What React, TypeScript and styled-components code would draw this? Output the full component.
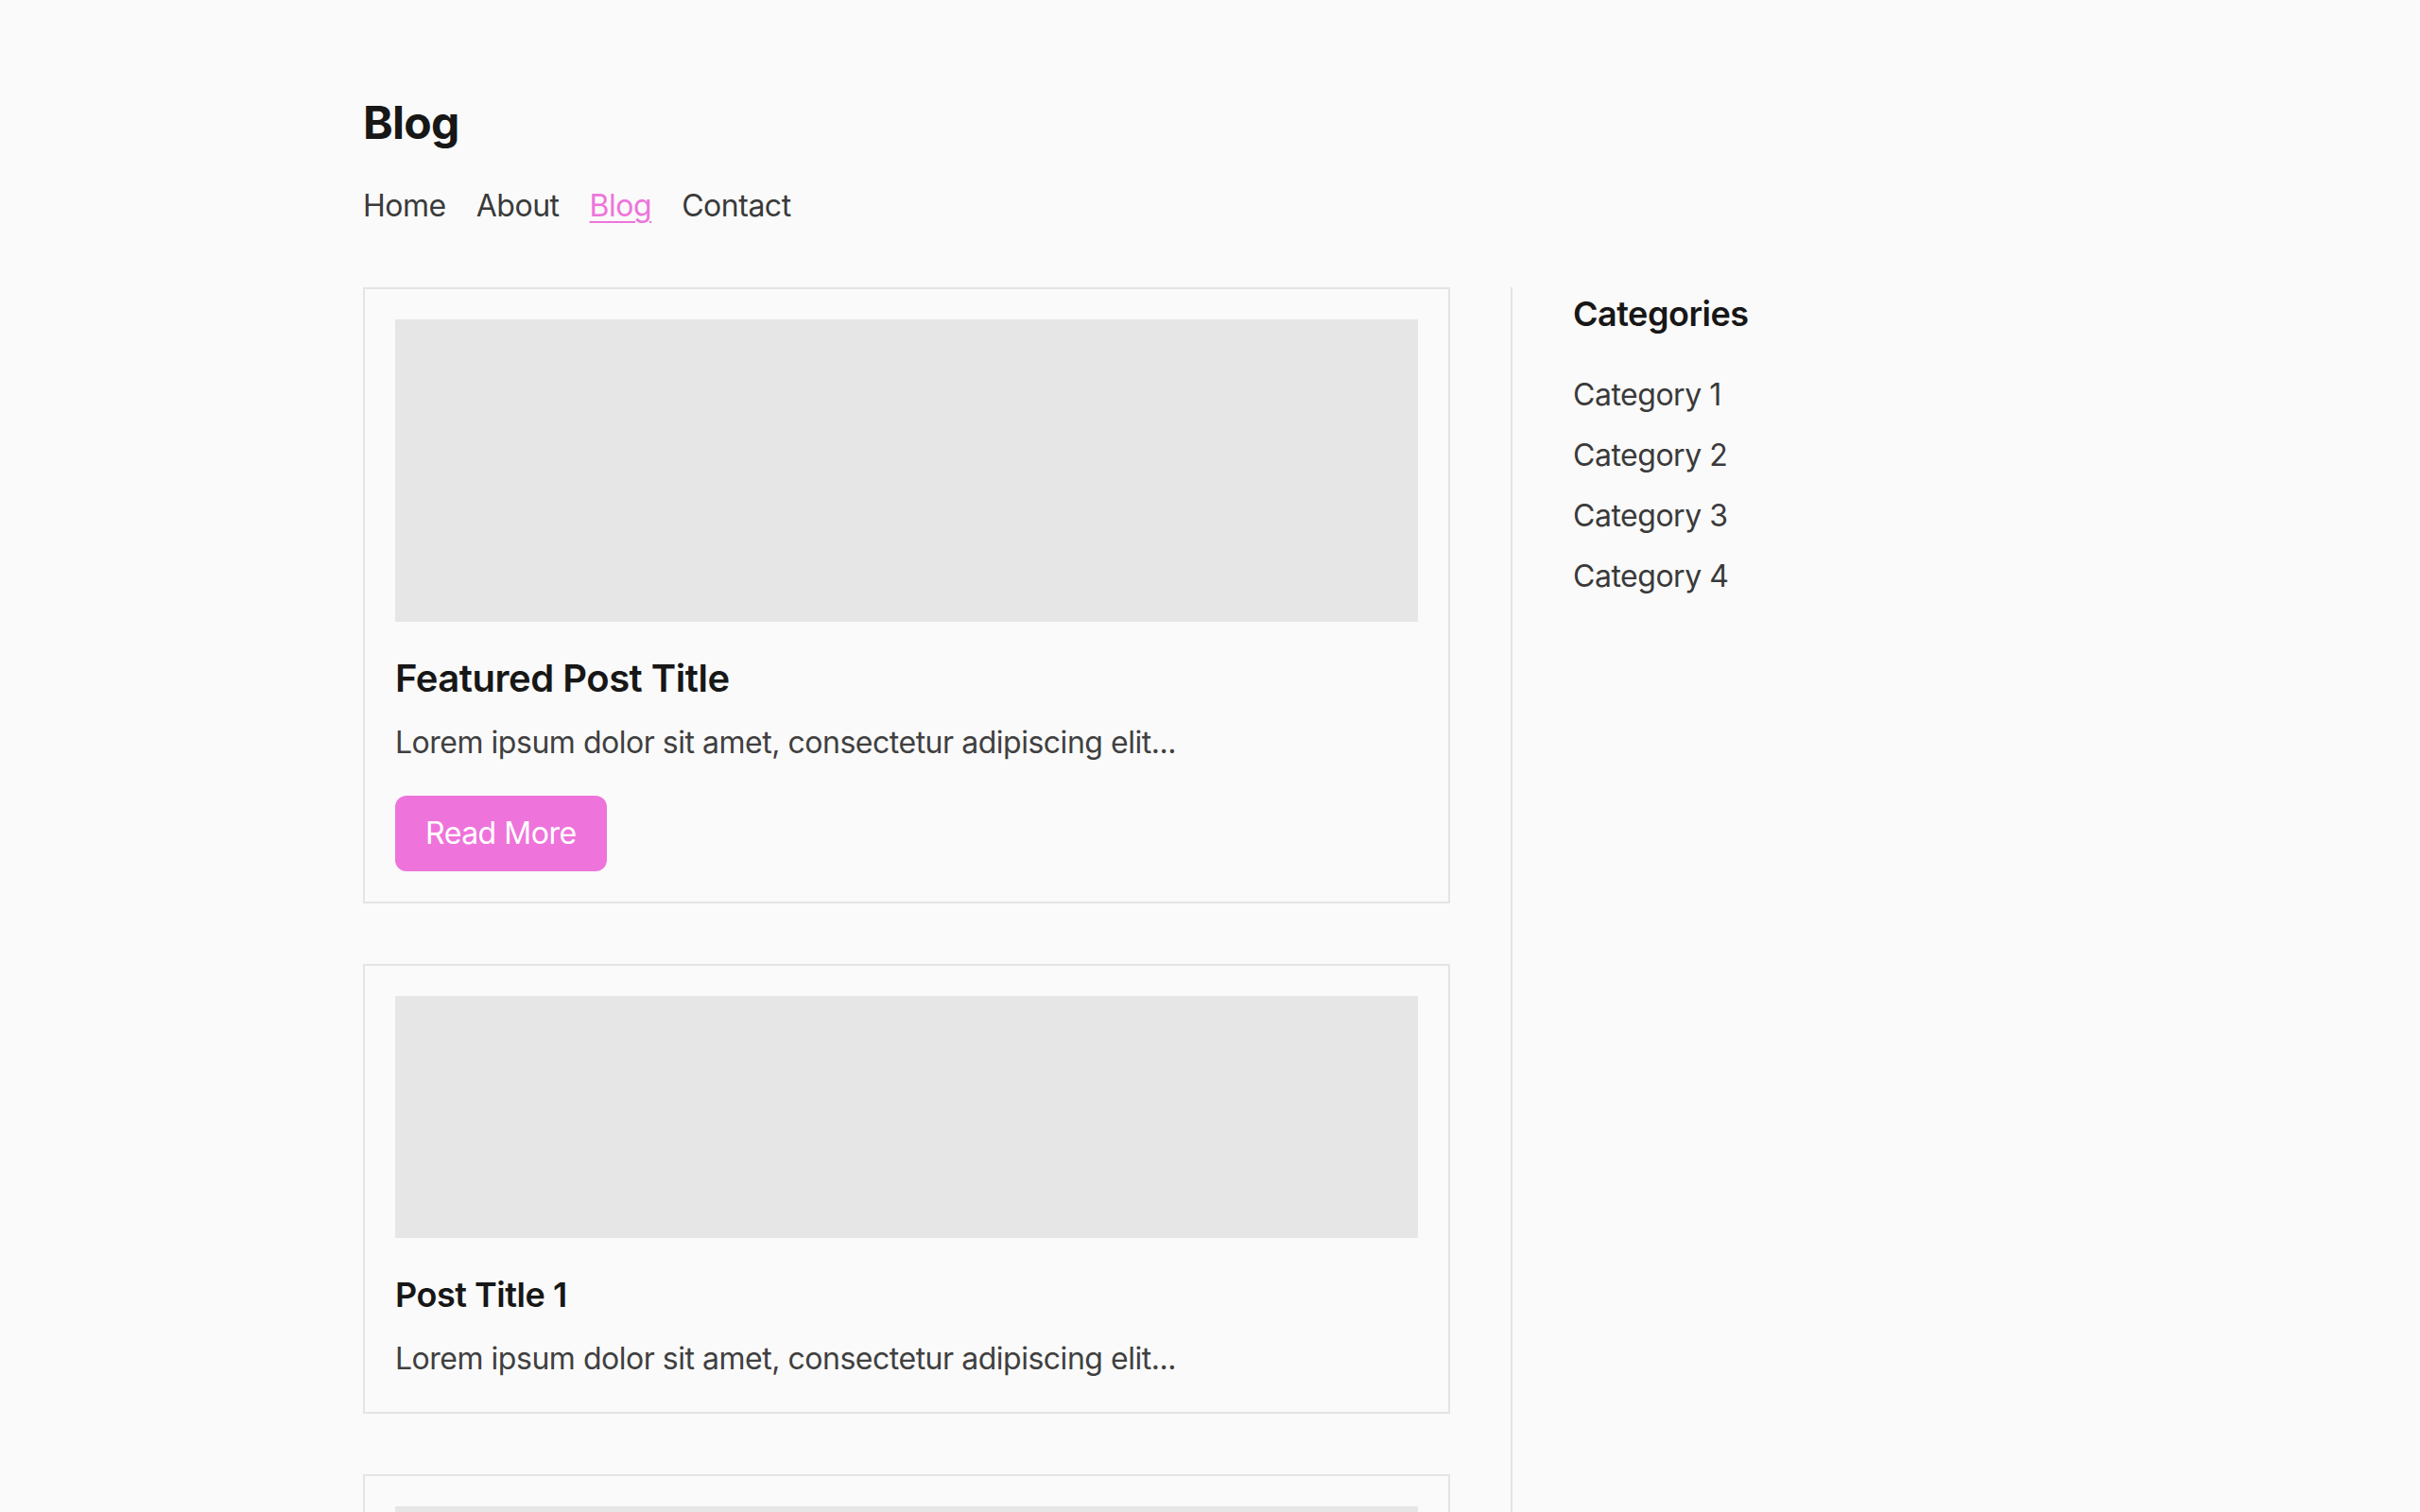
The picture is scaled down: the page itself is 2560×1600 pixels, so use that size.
import React, { FunctionComponent } from 'react';
import styled, { createGlobalStyle } from 'styled-components';

const GlobalStyle = createGlobalStyle`
  * {
    box-sizing: border-box;
  }

  html,
  body {
    margin: 0;
    padding: 0;
    background: #fafafa;
    font-family: Inter, 'Noto Sans', 'Liberation Sans', sans-serif;
    letter-spacing: -0.03em;
    color: #333333;
  }
`;

const Page = styled.div`
  max-width: 1792px;
  margin: 0 auto;
  padding: 98px 0 64px;
`;

const Header = styled.header`
  margin-bottom: 62px;
`;

const SiteTitle = styled.h1`
  margin: 0 0 32px;
  font-size: 48px;
  line-height: 64px;
  font-weight: 700;
  letter-spacing: -0.015em;
  color: #171717;
`;

const Nav = styled.nav`
  display: flex;
  gap: 32px;
`;

const NavLink = styled.a<{ $active?: boolean }>`
  font-size: 32px;
  line-height: 48px;
  color: ${(p) => (p.$active ? '#ee74db' : '#3a3a3a')};
  text-decoration: ${(p) => (p.$active ? 'underline' : 'none')};
  text-decoration-thickness: 2px;
  text-underline-offset: 5px;
  cursor: pointer;
`;

const Layout = styled.div`
  display: grid;
  grid-template-columns: 1150px 1fr;
  gap: 64px;
`;

const Main = styled.main`
  display: flex;
  flex-direction: column;
  gap: 64px;
`;

const Card = styled.article`
  border: 2px solid #e4e4e4;
  padding: 32px;
`;

const Thumb = styled.div<{ $height: number }>`
  height: ${(p) => p.$height}px;
  background: #e6e6e6;
  margin-bottom: 32px;
`;

const PostTitle = styled.h2<{ $featured?: boolean }>`
  margin: 0 0 16px;
  font-size: ${(p) => (p.$featured ? 40 : 36)}px;
  line-height: 56px;
  font-weight: 600;
  color: #171717;
`;

const Excerpt = styled.p`
  margin: 0;
  font-size: 32px;
  line-height: 48px;
  color: #404040;
`;

const ReadMore = styled.button`
  margin-top: 32px;
  padding: 16px 32px;
  border: none;
  border-radius: 12px;
  background: #ee74db;
  color: #ffffff;
  font-family: inherit;
  font-size: 32px;
  line-height: 48px;
  letter-spacing: inherit;
  cursor: pointer;
`;

const Sidebar = styled.aside`
  border-left: 2px solid #e4e4e4;
  padding-left: 64px;
`;

const SidebarTitle = styled.h3`
  margin: 0 0 34px;
  font-size: 36px;
  line-height: 56px;
  font-weight: 600;
  color: #171717;
`;

const CategoryList = styled.ul`
  list-style: none;
  margin: 0;
  padding: 0;
  display: flex;
  flex-direction: column;
  gap: 16px;
`;

const CategoryItem = styled.li`
  font-size: 32px;
  line-height: 48px;
  color: #3a3a3a;
`;

const excerpt = 'Lorem ipsum dolor sit amet, consectetur adipiscing elit...';

const navItems = ['Home', 'About', 'Blog', 'Contact'];
const posts = ['Post Title 1', 'Post Title 2', 'Post Title 3'];
const categories = ['Category 1', 'Category 2', 'Category 3', 'Category 4'];

const App: FunctionComponent = () => {
  return (
    <>
      <GlobalStyle />
      <Page>
        <Header>
          <SiteTitle>Blog</SiteTitle>
          <Nav>
            {navItems.map((item) => (
              <NavLink key={item} $active={item === 'Blog'}>
                {item}
              </NavLink>
            ))}
          </Nav>
        </Header>
        <Layout>
          <Main>
            <Card>
              <Thumb $height={320} />
              <PostTitle $featured>Featured Post Title</PostTitle>
              <Excerpt>{excerpt}</Excerpt>
              <ReadMore>Read More</ReadMore>
            </Card>
            {posts.map((title) => (
              <Card key={title}>
                <Thumb $height={256} />
                <PostTitle>{title}</PostTitle>
                <Excerpt>{excerpt}</Excerpt>
              </Card>
            ))}
          </Main>
          <Sidebar>
            <SidebarTitle>Categories</SidebarTitle>
            <CategoryList>
              {categories.map((c) => (
                <CategoryItem key={c}>{c}</CategoryItem>
              ))}
            </CategoryList>
          </Sidebar>
        </Layout>
      </Page>
    </>
  );
};

export default App;
